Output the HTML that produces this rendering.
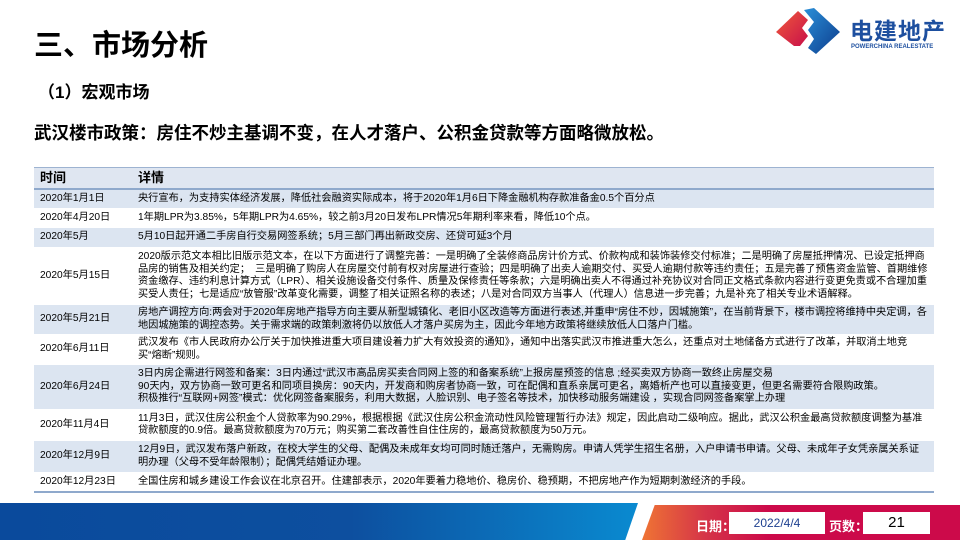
<!DOCTYPE html>
<html><head><meta charset="utf-8"><style>
*{margin:0;padding:0;box-sizing:border-box}
body{width:960px;height:540px;position:relative;background:#fff;font-family:"Liberation Sans","Noto Sans CJK SC",sans-serif;overflow:hidden;color:#000}
.t1{position:absolute;left:34px;top:22px;font-size:29px;font-weight:bold;letter-spacing:0px}
.t2{position:absolute;left:38px;top:78px;font-size:17px;font-weight:bold}
.t3{position:absolute;left:34px;top:120px;font-size:17.5px;font-weight:bold}
table{position:absolute;left:34px;top:167px;width:900px;border-collapse:collapse;font-size:10.2px;line-height:12.5px}
th{background:#dfe6f1;text-align:left;font-size:13px;font-weight:bold;height:21px;padding:0 6px;border-top:1px solid #9db3d1;border-bottom:2px solid #8fa9cc}
td{padding:0 6px;vertical-align:middle}
td:first-child{width:98px;white-space:nowrap}
tr.s td{background:#dce5f1}
tbody tr{border-bottom:1px solid #fff}
tbody tr:last-child{border-bottom:2px solid #8fa9cc}
.bar{position:absolute;left:0;top:503px;width:638px;height:37px;background:linear-gradient(90deg,#0a4a9c 0%,#0d4f9f 55%,#0a8ad0 100%);clip-path:polygon(0 0,100% 0,98% 100%,0 100%)}
.bar2{position:absolute;left:642px;top:505px;width:318px;height:35px;background:linear-gradient(90deg,#ef7434 0%,#d53448 20%,#cc0a4a 40%,#cc0a4a 100%);clip-path:polygon(4% 0,100% 0,100% 100%,0 100%);border-top-left-radius:6px}
.lab{position:absolute;top:516px;color:#fff;font-size:13px;font-weight:bold}
.box{position:absolute;top:512px;height:22px;background:#fff;text-align:center;line-height:22px}
</style></head><body>
<div class="t1">三、市场分析</div>
<div class="t2">（1）宏观市场</div>
<div class="t3">武汉楼市政策：房住不炒主基调不变，在人才落户、公积金贷款等方面略微放松。</div>
<svg style="position:absolute;left:774px;top:6px" width="70" height="50" viewBox="0 0 70 50">
<defs><linearGradient id="r" x1="0" y1="0" x2="1" y2="1"><stop offset="0" stop-color="#f05a3a"/><stop offset="1" stop-color="#c8104a"/></linearGradient>
<linearGradient id="b" x1="0" y1="0" x2="1" y2="1"><stop offset="0" stop-color="#2a8fd8"/><stop offset="1" stop-color="#0d3c8c"/></linearGradient></defs>
<path d="M2 26 L24 5 L34 14 L28 22 L34 30 L26 40 L20 40 Z" fill="url(#r)"/>
<path d="M30 4 L40 2 L66 26 L42 48 L34 42 L40 33 L34 24 L40 16 Z" fill="url(#b)"/>
</svg>
<div style="position:absolute;left:850px;top:12px;font-size:23px;font-weight:bold;color:#1d4f9f;letter-spacing:1px">电建地产</div>
<div style="position:absolute;left:851px;top:44px;font-size:6px;font-weight:bold;color:#1d4f9f">POWERCHINA REALESTATE</div>
<table>
<thead><tr><th>时间</th><th>详情</th></tr></thead>
<tbody>
<tr class="s" style="height:20px"><td>2020年1月1日</td><td>央行宣布，为支持实体经济发展，降低社会融资实际成本，将于2020年1月6日下降金融机构存款准备金0.5个百分点</td></tr>
<tr style="height:19px"><td>2020年4月20日</td><td>1年期LPR为3.85%，5年期LPR为4.65%，较之前3月20日发布LPR情况5年期利率来看，降低10个点。</td></tr>
<tr class="s" style="height:20px"><td>2020年5月</td><td>5月10日起开通二手房自行交易网签系统；5月三部门再出新政交房、还贷可延3个月</td></tr>
<tr style="height:57px"><td>2020年5月15日</td><td>2020版示范文本相比旧版示范文本，在以下方面进行了调整完善：一是明确了全装修商品房计价方式、价款构成和装饰装修交付标准；二是明确了房屋抵押情况、已设定抵押商品房的销售及相关约定；　三是明确了购房人在房屋交付前有权对房屋进行查验；四是明确了出卖人逾期交付、买受人逾期付款等违约责任；五是完善了预售资金监管、首期维修资金缴存、违约利息计算方式（LPR）、相关设施设备交付条件、质量及保修责任等条款；六是明确出卖人不得通过补充协议对合同正文格式条款内容进行变更免责或不合理加重买受人责任；七是适应“放管服”改革变化需要，调整了相关证照名称的表述；八是对合同双方当事人（代理人）信息进一步完善；九是补充了相关专业术语解释。</td></tr>
<tr class="s" style="height:30px"><td>2020年5月21日</td><td>房地产调控方向:两会对于2020年房地产指导方向主要从新型城镇化、老旧小区改造等方面进行表述,并重申“房住不炒，因城施策”，在当前背景下，楼市调控将维持中央定调，各地因城施策的调控态势。关于需求端的政策刺激将仍以放低人才落户买房为主，因此今年地方政策将继续放低人口落户门槛。</td></tr>
<tr style="height:30px"><td>2020年6月11日</td><td>武汉发布《市人民政府办公厅关于加快推进重大项目建设着力扩大有效投资的通知》，通知中出落实武汉市推进重大怎么，还重点对土地储备方式进行了改革，并取消土地竞买“熔断”规则。</td></tr>
<tr class="s" style="height:45px"><td>2020年6月24日</td><td>3日内房企需进行网签和备案：3日内通过“武汉市高品房买卖合同网上签的和备案系统”上报房屋预签的信息 ;经买卖双方协商一致终止房屋交易<br>90天内，双方协商一致可更名和同项目换房：90天内，开发商和购房者协商一致，可在配偶和直系亲属可更名，离婚析产也可以直接变更，但更名需要符合限购政策。<br>积极推行“互联网+网签”模式：优化网签备案服务，利用大数据，人脸识别、电子签名等技术，加快移动服务端建设 ，实现合同网签备案掌上办理</td></tr>
<tr style="height:31px"><td>2020年11月4日</td><td>11月3日，武汉住房公积金个人贷款率为90.29%，根据根据《武汉住房公积金流动性风险管理暂行办法》规定，因此启动二级响应。据此，武汉公积金最高贷款额度调整为基准贷款额度的0.9倍。最高贷款额度为70万元；购买第二套改善性自住住房的，最高贷款额度为50万元。</td></tr>
<tr class="s" style="height:32px"><td>2020年12月9日</td><td>12月9日，武汉发布落户新政，在校大学生的父母、配偶及未成年女均可同时随迁落户，无需购房。申请人凭学生招生名册，入户申请书申请。父母、未成年子女凭亲属关系证明办理（父母不受年龄限制）；配偶凭结婚证办理。</td></tr>
<tr style="height:19px"><td>2020年12月23日</td><td>全国住房和城乡建设工作会议在北京召开。住建部表示，2020年要着力稳地价、稳房价、稳预期，不把房地产作为短期刺激经济的手段。</td></tr>
</tbody></table>
<div class="bar"></div>
<div class="bar2"></div>
<div class="lab" style="left:696px">日期：</div>
<div class="box" style="left:729px;width:96px;color:#1d3f8f;font-size:12px">2022/4/4</div>
<div class="lab" style="left:829px">页数：</div>
<div class="box" style="left:863px;width:67px;font-size:15px">21</div>
</body></html>
